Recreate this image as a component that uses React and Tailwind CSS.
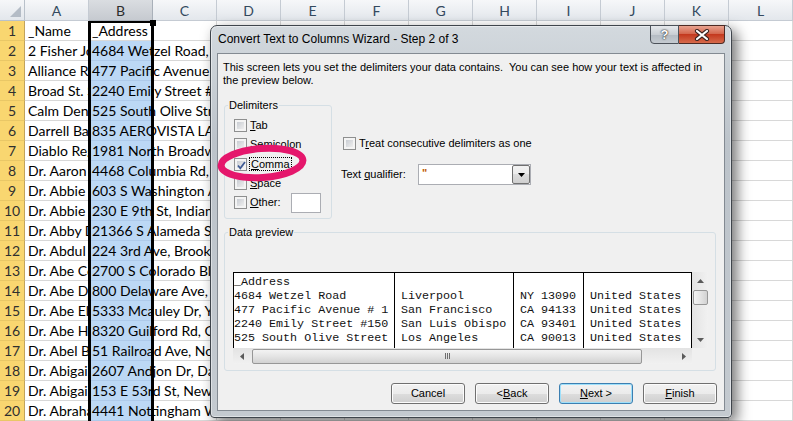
import React from "react";

const COLS = ["A", "B", "C", "D", "E", "F", "G", "H", "I", "J", "K", "L"];

const names = [
  "_Name", "2 Fisher Johnson", "Alliance Rehab", "Broad St. Surgery", "Calm Dental",
  "Darrell Baker", "Diablo Regional", "Dr. Aaron Smith", "Dr. Abbie Lee", "Dr. Abbie Ross",
  "Dr. Abby Dean", "Dr. Abdul Khan", "Dr. Abe Cohen", "Dr. Abe Dyer", "Dr. Abe Ellis",
  "Dr. Abe Hart", "Dr. Abel Brown", "Dr. Abigail Ames", "Dr. Abigail Cole", "Dr. Abraham Low",
];

const addrs = [
  "_Address", "4684 Wetzel Road, Liverpool, NY 13090", "477 Pacific Avenue # 1, San Francisco",
  "2240 Emily Street #150, San Luis Obispo", "525 South Olive Street, Los Angeles",
  "835 AEROVISTA LANE, San Luis Obispo", "1981 North Broadway, Walnut Creek",
  "4468 Columbia Rd, Augusta", "603 S Washington Ave, Lansing", "230 E 9th St, Indianapolis",
  "21366 S Alameda St, Long Beach", "224 3rd Ave, Brooklyn", "2700 S Colorado Blvd, Denver",
  "800 Delaware Ave, Wilmington", "5333 Mcauley Dr, Ypsilanti", "8320 Guilford Rd, Columbia",
  "51 Railroad Ave, Norwood", "2607 Andjon Dr, Dallas", "153 E 53rd St, New York",
  "4441 Nottingham Way, Hamilton",
];

const preview = [
  ["_Address", "", "", ""],
  ["4684 Wetzel Road", "Liverpool", "NY 13090", "United States"],
  ["477 Pacific Avenue # 1", "San Francisco", "CA 94133", "United States"],
  ["2240 Emily Street #150", "San Luis Obispo", "CA 93401", "United States"],
  ["525 South Olive Street", "Los Angeles", "CA 90013", "United States"],
];

function Check({ checked }) {
  return (
    <div className="w-[13px] h-[13px] shrink-0 border border-[#8e8f8f] bg-[#f4f4f4] p-[2px]">
      <div className="w-full h-full bg-[linear-gradient(135deg,#c9cdd3,#eeeeee)] relative">
        {checked && (
          <svg width="11" height="11" viewBox="0 0 11 11" className="absolute -left-[1px] -top-[1px]">
            <path d="M2 5.5 L4.3 8.3 L9 2" fill="none" stroke="#3e5a94" strokeWidth="1.7" />
          </svg>
        )}
      </div>
    </div>
  );
}

function Btn({ children, def }) {
  return (
    <div
      className={
        def
          ? "w-[74px] h-[21px] rounded-[3px] border border-[#3c7fb1] bg-[linear-gradient(#f2f2f2,#ebebeb_50%,#dddddd_50%,#cfcfcf)] shadow-[inset_0_0_0_1px_#9ee0fb] flex items-center justify-center text-[11px] text-black"
          : "w-[74px] h-[21px] rounded-[3px] border border-[#707070] bg-[linear-gradient(#f2f2f2,#ebebeb_50%,#dddddd_50%,#cfcfcf)] shadow-[inset_0_0_0_1px_#fcfcfc] flex items-center justify-center text-[11px] text-black"
      }
    >
      {children}
    </div>
  );
}

function Arrow({ dir }) {
  const pts = {
    up: "0,4 3.5,0 7,4",
    down: "0,0 3.5,4 7,0",
    left: "4,0 0,3.5 4,7",
    right: "0,0 4,3.5 0,7",
  }[dir];
  const w = dir === "up" || dir === "down" ? 7 : 4;
  const h = dir === "up" || dir === "down" ? 4 : 7;
  return (
    <svg width={w} height={h} viewBox={`0 0 ${w} ${h}`}>
      <polygon points={pts} fill="#5b5b5b" />
    </svg>
  );
}

function Grip() {
  return (
    <div className="flex gap-[1px]">
      <div className="w-[1px] h-[6px] bg-[#6e6e6e]" />
      <div className="w-[1px] h-[6px] bg-[#6e6e6e]" />
      <div className="w-[1px] h-[6px] bg-[#6e6e6e]" />
    </div>
  );
}

function Spreadsheet() {
  return (
    <div className="flex flex-col font-['Lato'] text-[14px] text-black">
      <div className="flex h-[21px]">
        <div className="w-[25px] shrink-0 border-r border-b border-[#b9c1ca] bg-[linear-gradient(#f6f7f9,#e3e7ec)] flex items-end justify-end pr-[3px] pb-[3px]">
          <svg width="11" height="11" viewBox="0 0 11 11">
            <polygon points="11,0 11,11 0,11" fill="#b4bcc6" />
          </svg>
        </div>
        {COLS.map((c) => (
          <div
            key={c}
            className={
              c === "B"
                ? "w-[64px] shrink-0 border-r border-b border-[#a9b0b9] bg-[linear-gradient(#dadde1,#c6cad0)] flex items-center justify-center text-[#2c2c2c]"
                : "w-[64px] shrink-0 border-r border-b border-[#c5cbd3] bg-[linear-gradient(#f6f7f9,#e3e7ec)] flex items-center justify-center text-[#34495e]"
            }
          >
            {c}
          </div>
        ))}
      </div>
      {names.map((n, i) => (
        <div key={i} className="flex h-[20px]">
          <div className="w-[25px] shrink-0 border-r border-b border-r-[#c2a35c] border-b-[#e9c766] bg-[#f9d670] flex items-center justify-center text-[#2f2f2f]">
            {i + 1}
          </div>
          <div className="w-[64px] shrink-0 border-r border-b border-[#d8d8d8] overflow-hidden whitespace-nowrap pl-[3px] flex items-center">
            {n}
          </div>
          <div
            className={
              i === 0
                ? "w-[64px] shrink-0 border-b border-[#d8d8d8] bg-white whitespace-nowrap pl-[3px] flex items-center relative z-10"
                : "w-[64px] shrink-0 border-b border-[#aecaea] bg-[#bcd8f5] whitespace-nowrap pl-[3px] flex items-center relative z-10"
            }
          >
            {addrs[i]}
          </div>
          {COLS.slice(2).map((c) => (
            <div key={c} className="w-[64px] shrink-0 border-r border-b border-[#d8d8d8]" />
          ))}
        </div>
      ))}
    </div>
  );
}

function Dialog() {
  return (
    <div className="absolute left-[210px] top-[25px] w-[522px] h-[393px] z-20 rounded-t-[7px] rounded-b-[4px] border border-[#3f454c] bg-[linear-gradient(#d3d9de,#bcc3ca_30%,#c4cad0)] shadow-[inset_0_0_0_1px_rgba(255,255,255,0.45),5px_5px_14px_rgba(0,0,0,0.55)] flex flex-col font-['Liberation_Sans'] text-black">
      <div className="h-[27px] flex items-start shrink-0">
        <div className="pl-[7px] pt-[6px] text-[12px] leading-[14px] whitespace-nowrap">
          Convert Text to Columns Wizard - Step 2 of 3
        </div>
        <div className="ml-auto mr-[6px] -mt-[1px] flex">
          <div className="w-[29px] h-[19px] rounded-bl-[4px] border border-[#4c525a] bg-[linear-gradient(#e6e9ec,#c9ced4_50%,#b3bac2_50%,#c5cbd1)] flex items-center justify-center">
            <span className="text-[13px] font-bold text-white leading-none [text-shadow:0_0_2px_#222,0_0_1px_#222]">?</span>
          </div>
          <div className="w-[46px] h-[19px] rounded-br-[4px] border border-l-0 border-[#4c2a24] bg-[linear-gradient(#e8a28f,#d4684f_45%,#c4391f_50%,#d66a4b)] flex items-center justify-center">
            <svg width="16" height="12" viewBox="0 0 16 12">
              <path d="M3 2 L13 10 M13 2 L3 10" stroke="#3a2320" strokeWidth="4.2" strokeLinecap="round" />
              <path d="M3 2 L13 10 M13 2 L3 10" stroke="#ffffff" strokeWidth="2.2" strokeLinecap="round" />
            </svg>
          </div>
        </div>
      </div>

      <div className="mx-[6px] mb-[6px] flex-1 border border-[#838a92] bg-[#f0f0f0] flex flex-col text-[11px] leading-[13px]">
        <div className="pt-[7px] pl-[5px] whitespace-pre">
          {"This screen lets you set the delimiters your data contains.  You can see how your text is affected in\nthe preview below."}
        </div>

        <div className="flex items-start mt-[12px] ml-[6px]">
          <fieldset className="w-[108px] h-[120px] border border-[#d5dfe5] rounded-[3px]">
            <legend className="ml-[3px] px-[1px] leading-[13px]">Delimiters</legend>
            <div className="pt-[4px] pl-[9px] flex flex-col">
              <div className="h-[19.3px] flex items-center gap-[3px]">
                <Check />
                <span><span className="underline">T</span>ab</span>
              </div>
              <div className="h-[19.3px] flex items-center gap-[3px]">
                <Check />
                <span>Se<span className="underline">m</span>icolon</span>
              </div>
              <div className="h-[19.3px] flex items-center gap-[2px]">
                <Check checked />
                <span className="border border-dotted border-black px-[1px] leading-[12px]"><span className="underline">C</span>omma</span>
              </div>
              <div className="h-[19.3px] flex items-center gap-[3px]">
                <Check />
                <span><span className="underline">S</span>pace</span>
              </div>
              <div className="h-[19.3px] flex items-center gap-[3px]">
                <Check />
                <span><span className="underline">O</span>ther:</span>
                <div className="ml-[7px] w-[30px] h-[20px] border border-[#abadb3] bg-white" />
              </div>
            </div>
          </fieldset>

          <div className="ml-[9px] pt-[38px] flex flex-col">
            <div className="h-[13px] flex items-center gap-[3px] pl-[2px]">
              <Check />
              <span>T<span className="underline">r</span>eat consecutive delimiters as one</span>
            </div>
            <div className="mt-[14px] h-[21px] flex items-center">
              <span className="w-[77px]">Text <span className="underline">q</span>ualifier:</span>
              <div className="w-[113px] h-[21px] border border-[#abadb3] bg-white flex">
                <div className="flex-1 pl-[3px] pt-[2px] text-[#c05800] font-bold">"</div>
                <div className="w-[18px] h-full border border-[#707070] rounded-[2px] bg-[linear-gradient(#f2f2f2,#ebebeb_50%,#dddddd_50%,#cfcfcf)] flex items-center justify-center">
                  <svg width="7" height="4" viewBox="0 0 7 4">
                    <polygon points="0,0 3.5,4 7,0" fill="#000" />
                  </svg>
                </div>
              </div>
            </div>
          </div>
        </div>

        <fieldset className="ml-[6px] mt-[7px] w-[492px] h-[145px] border border-[#d5dfe5] rounded-[3px]">
          <legend className="ml-[3px] px-[1px] leading-[13px]">Data <span className="underline">p</span>review</legend>
          <div className="ml-[8px] mt-[33px] w-[475px] h-[92px] flex flex-col bg-white">
            <div className="flex h-[76px]">
              <div className="w-[459px] h-full border-t border-l border-black flex font-['Liberation_Mono'] text-[11.7px] leading-[14px] text-[#111] whitespace-pre">
                {[0, 1, 2, 3].map((ci) => (
                  <div
                    key={ci}
                    className={
                      ci === 0
                        ? "w-[161px] h-full border-r border-black pt-[2px] overflow-hidden"
                        : ci === 1
                        ? "w-[119px] h-full border-r border-black pt-[2px] pl-[6px] overflow-hidden"
                        : ci === 2
                        ? "w-[70px] h-full border-r border-black pt-[2px] pl-[6px] overflow-hidden"
                        : "w-[108px] h-full border-r border-black pt-[2px] pl-[6px] overflow-hidden"
                    }
                  >
                    {preview.map((r, ri) => (
                      <div key={ri} className="h-[14px]">{r[ci]}</div>
                    ))}
                  </div>
                ))}
              </div>
              <div className="w-[16px] h-full bg-[linear-gradient(90deg,#e3e3e3,#f1f1f1)] flex flex-col items-center">
                <div className="h-[17px] w-full flex items-center justify-center"><Arrow dir="up" /></div>
                <div className="mt-[1px] h-[15px] w-[15px] rounded-[2px] border border-[#979797] bg-[linear-gradient(90deg,#f3f3f3,#e4e4e4_50%,#d2d2d2)]" />
                <div className="flex-1" />
                <div className="h-[17px] w-full flex items-center justify-center"><Arrow dir="down" /></div>
              </div>
            </div>
            <div className="flex h-[16px]">
              <div className="w-[459px] h-full bg-[linear-gradient(#e3e3e3,#f1f1f1)] flex items-center">
                <div className="w-[17px] h-full flex items-center justify-center"><Arrow dir="left" /></div>
                <div className="ml-[2px] w-[390px] h-[15px] rounded-[2px] border border-[#979797] bg-[linear-gradient(#f3f3f3,#e4e4e4_50%,#d2d2d2)] flex items-center justify-center">
                  <Grip />
                </div>
                <div className="flex-1" />
                <div className="w-[17px] h-full flex items-center justify-center"><Arrow dir="right" /></div>
              </div>
              <div className="w-[16px] h-full bg-[#f0f0f0]" />
            </div>
          </div>
        </fieldset>

        <div className="mt-[12px] pr-[7px] flex justify-end gap-[10px]">
          <Btn>Cancel</Btn>
          <Btn>&lt; <span className="underline">B</span>ack</Btn>
          <Btn def><span className="underline">N</span>ext &gt;</Btn>
          <Btn><span className="underline">F</span>inish</Btn>
        </div>
      </div>
    </div>
  );
}

export default function App() {
  return (
    <div className="relative w-[793px] h-[421px] overflow-hidden bg-white">
      <Spreadsheet />
      <div className="absolute left-[88px] top-[21px] w-[66px] h-[402px] border-l-[3px] border-r-[3px] border-t-[2px] border-black z-10 pointer-events-none" />
      <div className="absolute left-[150px] top-[20px] w-[6px] h-[6px] bg-black z-10" />
      <Dialog />
      <svg
        className="absolute left-[211px] top-[136px] z-30"
        width="104"
        height="56"
        viewBox="0 0 104 56"
      >
        <ellipse cx="51" cy="27" rx="41" ry="14.5" fill="none" stroke="#e5176c" strokeWidth="7" transform="rotate(-4 51 27)" />
      </svg>
    </div>
  );
}
